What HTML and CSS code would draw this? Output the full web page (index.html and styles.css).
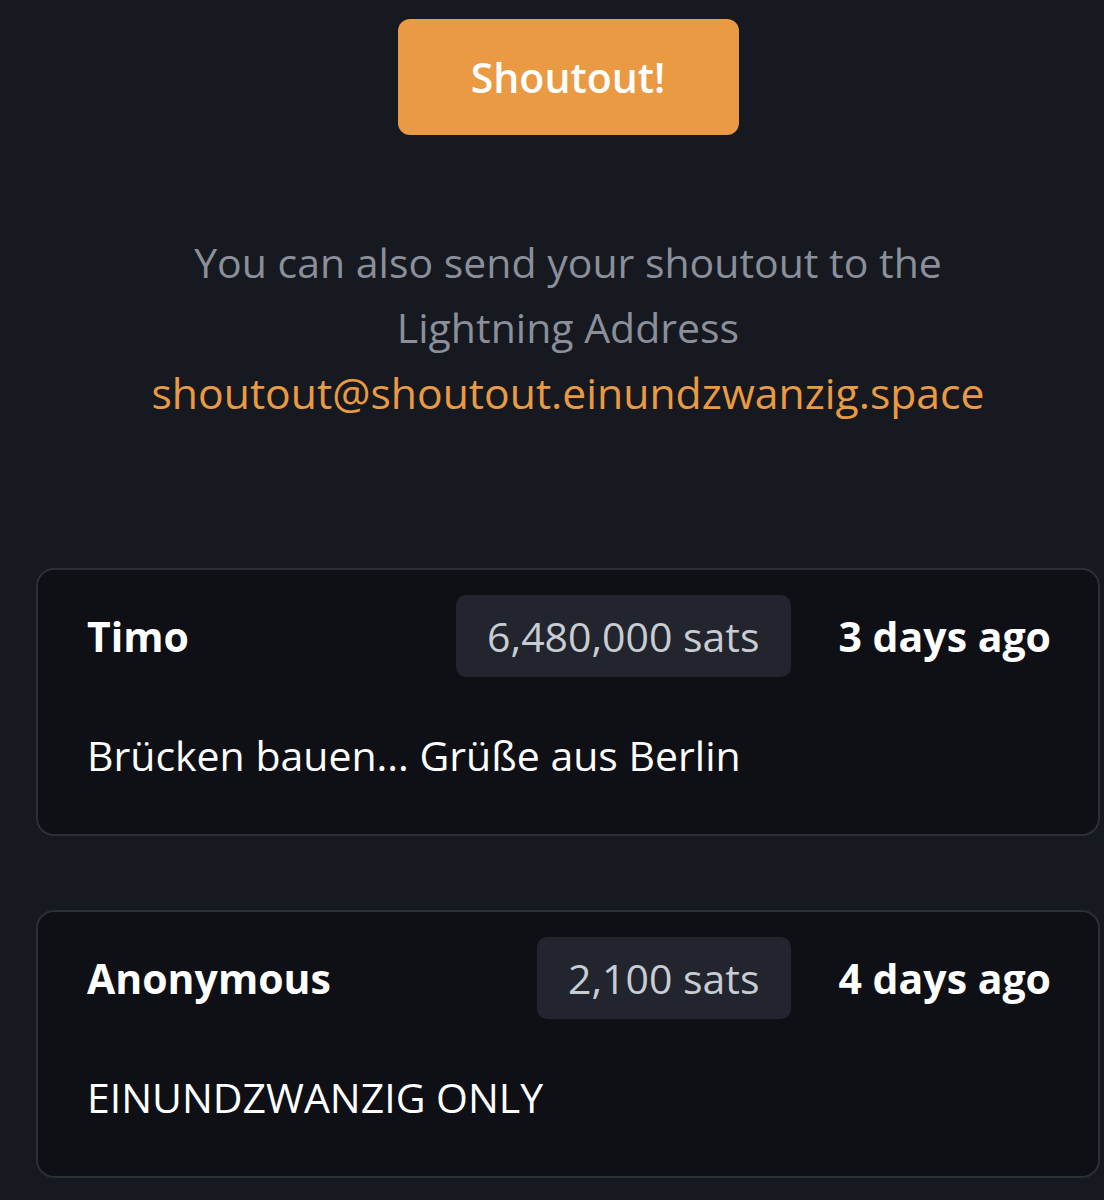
FILE: index.html
```html
<!DOCTYPE html>
<html lang="en">
<head>
<meta charset="utf-8">
<title>Shoutout</title>
<link rel="stylesheet" href="styles.css">
</head>
<body>
<main class="page">
  <div class="actions">
    <button class="btn-shoutout" type="button">Shoutout!</button>
  </div>
  <p class="info">
    You can also send your shoutout to the<br>Lightning Address<br>
    <a class="address" href="#">shoutout@shoutout.einundzwanzig.space</a>
  </p>
  <section class="list">
    <article class="card">
      <header class="card-head">
        <span class="name">Timo</span>
        <span class="amount">6,480,000 sats</span>
        <span class="time">3 days ago</span>
      </header>
      <p class="message">Brücken bauen... Grüße aus Berlin</p>
    </article>
    <article class="card">
      <header class="card-head">
        <span class="name">Anonymous</span>
        <span class="amount">2,100 sats</span>
        <span class="time">4 days ago</span>
      </header>
      <p class="message">EINUNDZWANZIG ONLY</p>
    </article>
  </section>
</main>
</body>
</html>
```
FILE: styles.css
```css
html, body {
  margin: 0;
  padding: 0;
  background: #171920;
}
body {
  font-family: "Open Sans", "Noto Sans", sans-serif;
  color: #ffffff;
}
.page {
  width: 1064px;
  margin-left: 36px;
  padding-top: 19px;
  display: flex;
  flex-direction: column;
  align-items: center;
}
.actions {
  display: flex;
  justify-content: center;
  width: 100%;
}
.btn-shoutout {
  width: 341px;
  height: 116px;
  background: #e99a42;
  border: none;
  border-radius: 12px;
  color: #ffffff;
  font-family: inherit;
  font-size: 41px;
  font-weight: 600;
  padding-bottom: 2px;
}
.info {
  margin: 95px 0 0;
  text-align: center;
  font-size: 41px;
  line-height: 65px;
  color: #8a8f99;
}
.address {
  color: #e99a42;
  text-decoration: none;
  font-size: 42.7px;
  font-weight: 500;
}
.list {
  width: 100%;
  margin-top: 142px;
  display: flex;
  flex-direction: column;
  gap: 74px;
}
.card {
  box-sizing: border-box;
  height: 268px;
  background: #0e1015;
  border: 2px solid #2b2f37;
  border-radius: 18px;
  padding: 25px 47px 0 49px;
}
.card-head {
  display: flex;
  align-items: center;
  height: 82px;
}
.name {
  flex: 1;
  font-size: 41px;
  font-weight: 700;
}
.amount {
  background: #22252d;
  border-radius: 10px;
  padding: 0 31px;
  height: 82px;
  display: flex;
  align-items: center;
  color: #c8ccd3;
  font-size: 41px;
}
.time {
  margin-left: 48px;
  font-size: 41px;
  font-weight: 700;
}
.message {
  margin: 50px 0 0;
  font-size: 41px;
  line-height: 1.4;
}
```
